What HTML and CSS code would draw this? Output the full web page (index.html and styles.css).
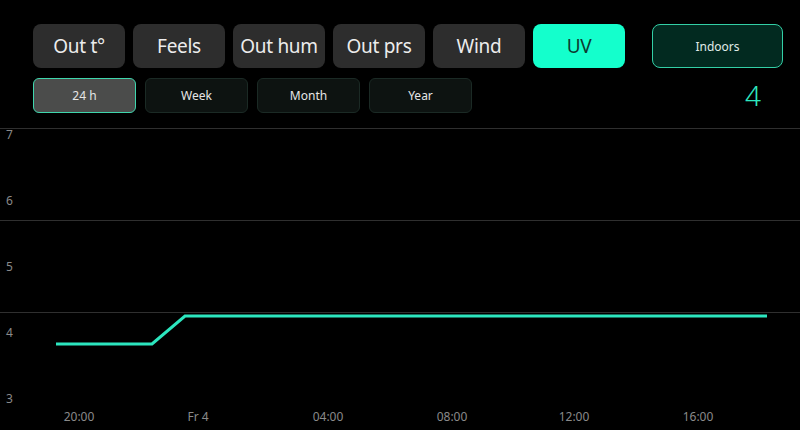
FILE: index.html
```html
<!DOCTYPE html>
<html>
<head>
<meta charset="utf-8">
<link rel="stylesheet" href="styles.css">
</head>
<body>
<div class="top">
  <div class="left">
    <div class="row metrics">
      <div class="btn">Out t°</div>
      <div class="btn">Feels</div>
      <div class="btn">Out hum</div>
      <div class="btn">Out prs</div>
      <div class="btn">Wind</div>
      <div class="btn active">UV</div>
    </div>
    <div class="row periods">
      <div class="pbtn sel">24 h</div>
      <div class="pbtn">Week</div>
      <div class="pbtn">Month</div>
      <div class="pbtn">Year</div>
    </div>
  </div>
  <div class="right">
    <div class="indoors">Indoors</div>
    <div class="value">4</div>
  </div>
</div>
<div class="chart">
  <svg width="800" height="310" viewBox="0 120 800 310">
    <g class="grid">
      <line x1="0" y1="128.5" x2="800" y2="128.5"/>
      <line x1="0" y1="220.5" x2="800" y2="220.5"/>
      <line x1="0" y1="312.5" x2="800" y2="312.5"/>
    </g>
    <g class="ylab">
      <text x="6" y="139">7</text>
      <text x="6" y="205">6</text>
      <text x="6" y="271">5</text>
      <text x="6" y="337">4</text>
      <text x="6" y="403">3</text>
    </g>
    <g class="xlab">
      <text x="79" y="421">20:00</text>
      <text x="198" y="421">Fr 4</text>
      <text x="328" y="421">04:00</text>
      <text x="452" y="421">08:00</text>
      <text x="574" y="421">12:00</text>
      <text x="698" y="421">16:00</text>
    </g>
    <polyline class="series" points="56,344 152,344 185,316 767,316"/>
  </svg>
</div>
</body>
</html>
```
FILE: styles.css
```css
html, body {
  margin: 0;
  padding: 0;
  background: #000;
  width: 800px;
  height: 430px;
  overflow: hidden;
  font-family: "Noto Sans", "Open Sans", sans-serif;
}
.top {
  display: flex;
  padding: 24px 17px 0 33px;
  height: 104px;
  box-sizing: border-box;
}
.left {
  display: flex;
  flex-direction: column;
  gap: 10px;
}
.row {
  display: flex;
}
.metrics {
  gap: 8px;
}
.btn {
  width: 92px;
  height: 44px;
  border-radius: 8px;
  background: #2d2d2d;
  color: #ececec;
  font-size: 19px;
  letter-spacing: -0.3px;
  display: flex;
  align-items: center;
  justify-content: center;
}
.btn.active {
  background: #14ffcc;
  color: #0d3a30;
}
.periods {
  gap: 9px;
}
.pbtn {
  width: 103px;
  height: 35px;
  box-sizing: border-box;
  border-radius: 6px;
  background: #0d1311;
  border: 1px solid #1b2a25;
  color: #e6e6e6;
  font-size: 12px;
  display: flex;
  align-items: center;
  justify-content: center;
}
.pbtn.sel {
  background: #4b4c4b;
  border-color: #3fd6ad;
}
.right {
  margin-left: auto;
  width: 131px;
  display: flex;
  flex-direction: column;
  align-items: stretch;
}
.indoors {
  flex-shrink: 0;
  height: 44px;
  box-sizing: border-box;
  border: 1px solid #33cfa6;
  border-radius: 8px;
  background: #022a20;
  color: #e0ece8;
  font-size: 12px;
  display: flex;
  align-items: center;
  justify-content: center;
}
.value {
  flex-shrink: 0;
  align-self: flex-end;
  margin-right: 22px;
  margin-top: 13px;
  color: #2ee8c0;
  font-size: 28px;
  font-weight: 300;
  line-height: 28px;
}
.chart {
  margin-top: 16px;
  height: 310px;
}
.chart svg {
  display: block;
}
.grid line {
  stroke: #2f2f2f;
  stroke-width: 1;
}
.ylab text, .xlab text {
  fill: #8a8a8a;
  font-size: 12px;
  font-family: "Noto Sans", sans-serif;
}
.xlab text {
  text-anchor: middle;
}
.series {
  fill: none;
  stroke: #2ce6bf;
  stroke-width: 3;
  stroke-linejoin: miter;
}
```
